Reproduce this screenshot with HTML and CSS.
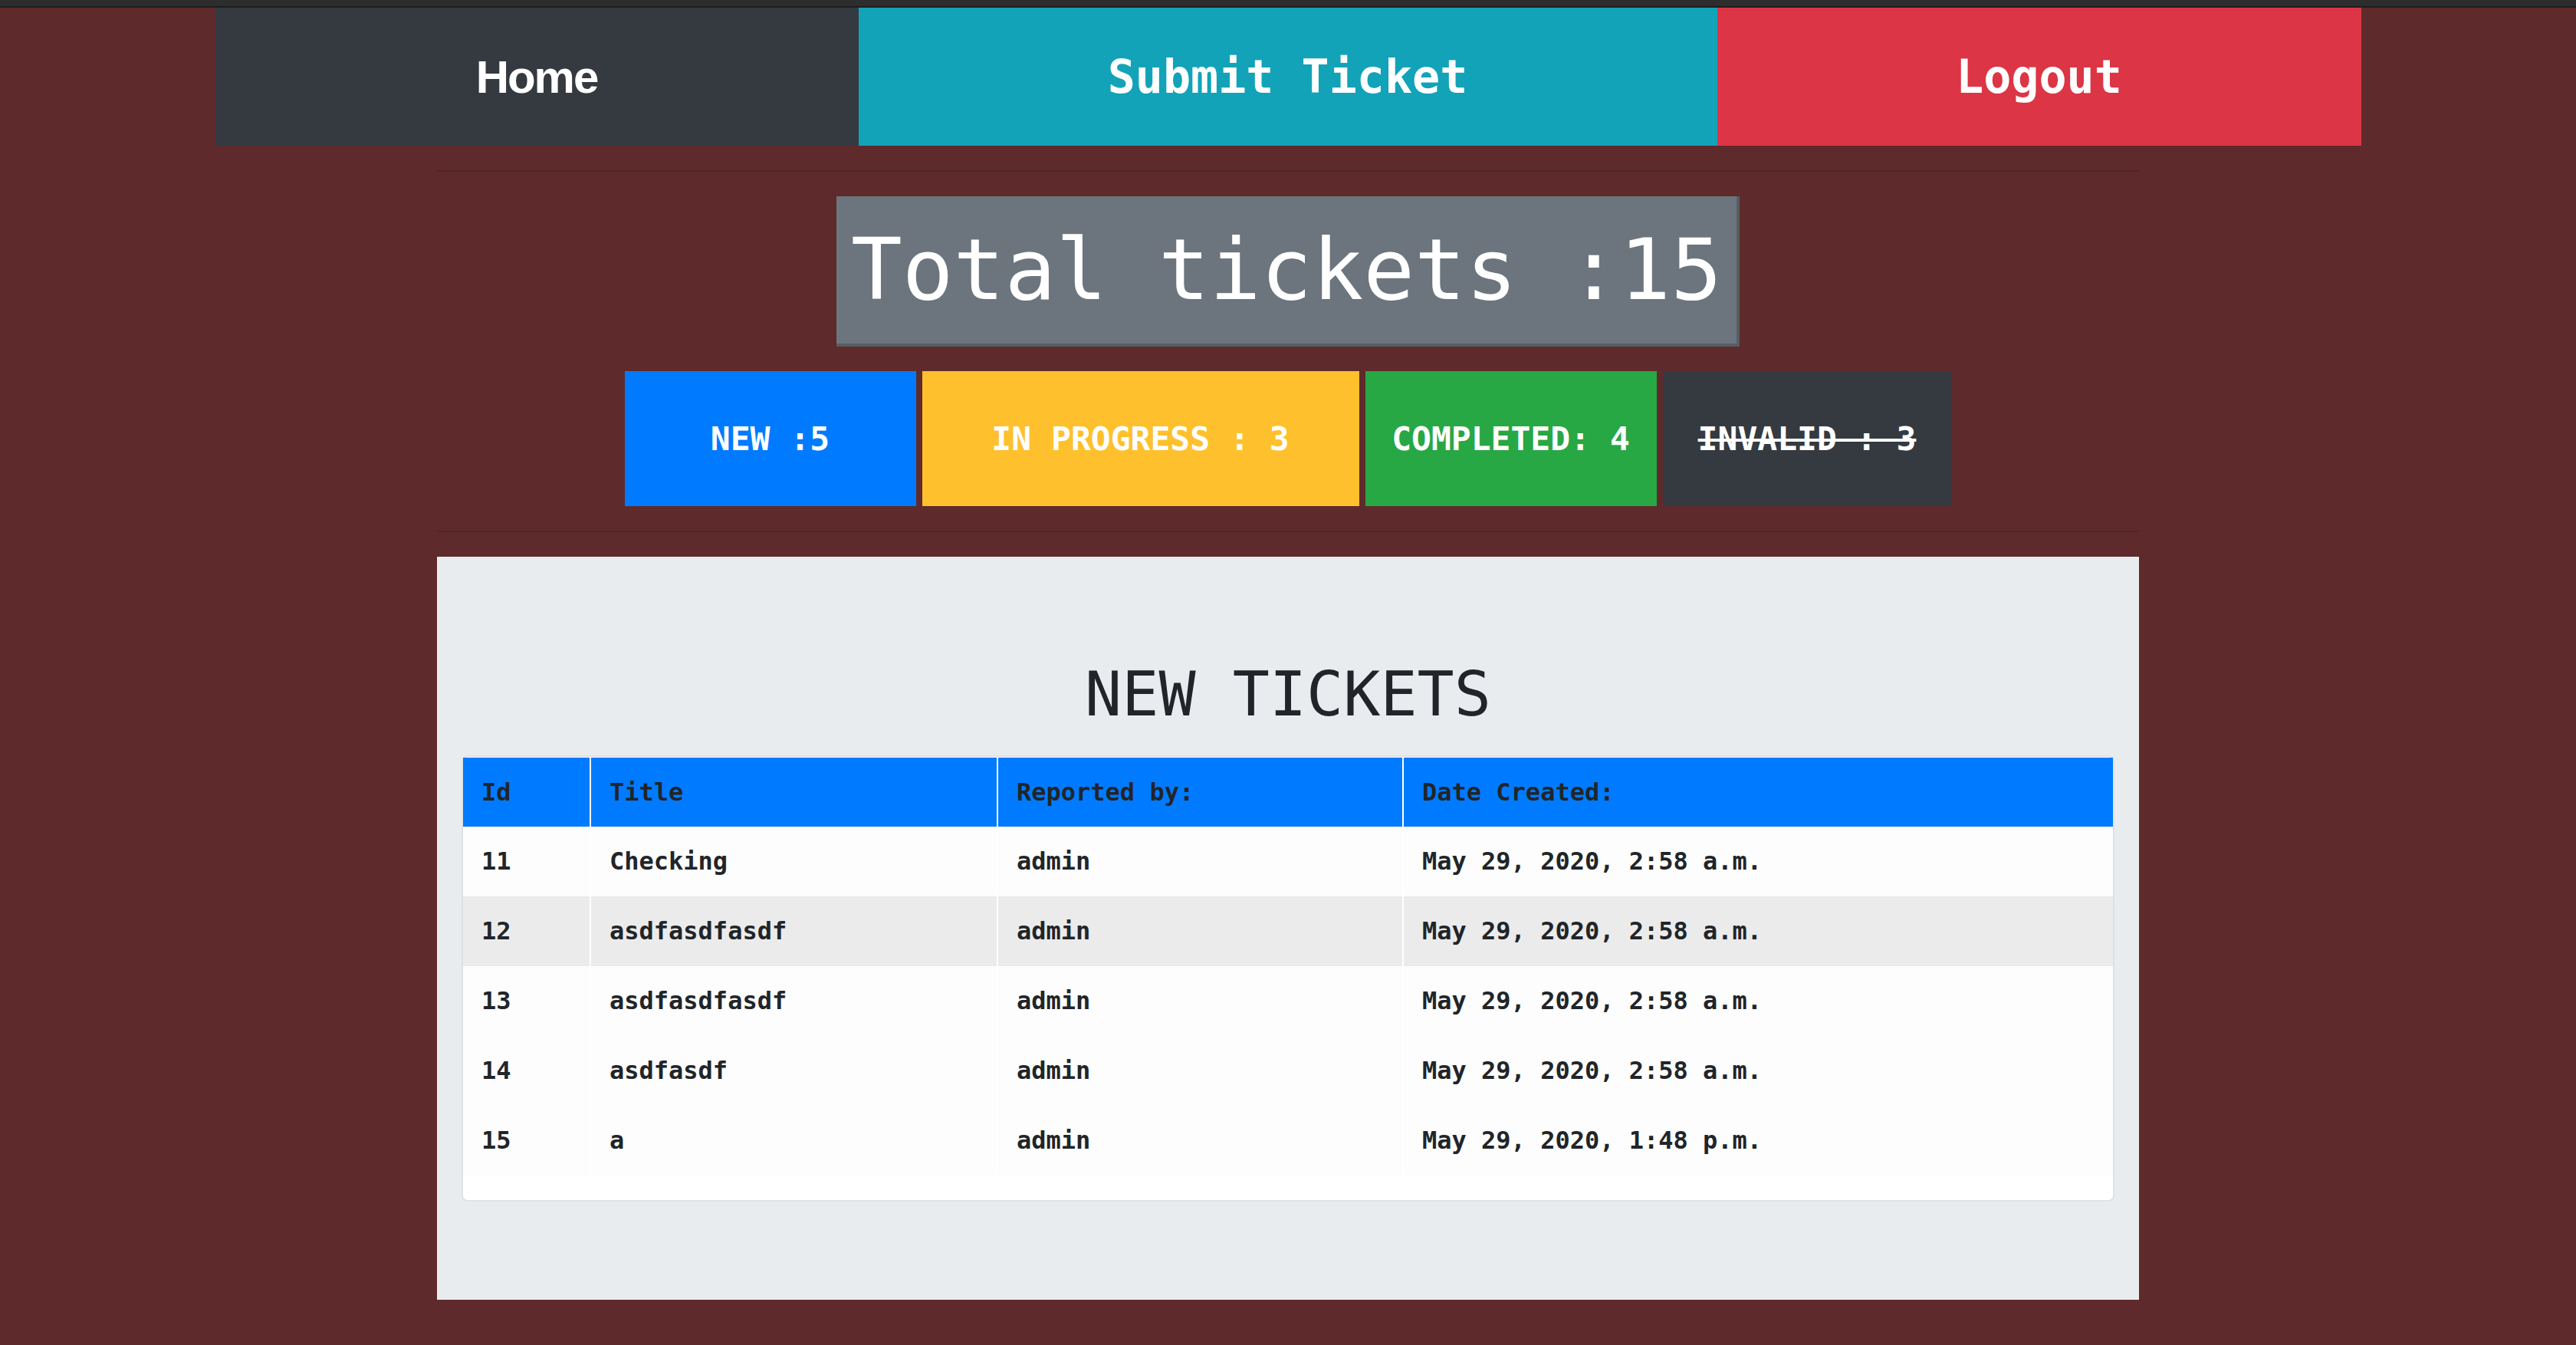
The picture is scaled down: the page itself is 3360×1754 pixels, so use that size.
FILE: index.html
```html
<!DOCTYPE html>
<html lang="en">
<head>
<meta charset="utf-8">
<title>Tickets</title>
<link rel="stylesheet" href="styles.css">
</head>
<body>
<div class="topbar"></div>
<nav class="nav">
  <a class="nav-item home" href="#">Home</a>
  <a class="nav-item submit" href="#">Submit Ticket</a>
  <a class="nav-item logout" href="#">Logout</a>
</nav>
<div class="container">
  <hr class="rule">
  <div class="total-wrap">
    <div class="total">Total tickets :15</div>
  </div>
  <div class="stats">
    <div class="stat s-new">NEW :5</div>
    <div class="stat s-prog">IN PROGRESS : 3</div>
    <div class="stat s-done">COMPLETED: 4</div>
    <div class="stat s-inv"><span class="strike">INVALID : 3</span></div>
  </div>
  <hr class="rule">
  <section class="jumbo">
    <h1 class="title">NEW TICKETS</h1>
    <div class="card">
      <table class="tbl">
        <colgroup>
          <col class="c-id">
          <col class="c-title">
          <col class="c-rep">
          <col>
        </colgroup>
        <thead>
          <tr><th>Id</th><th>Title</th><th>Reported by:</th><th>Date Created:</th></tr>
        </thead>
        <tbody>
          <tr><td>11</td><td>Checking</td><td>admin</td><td>May 29, 2020, 2:58 a.m.</td></tr>
          <tr class="hover"><td>12</td><td>asdfasdfasdf</td><td>admin</td><td>May 29, 2020, 2:58 a.m.</td></tr>
          <tr><td>13</td><td>asdfasdfasdf</td><td>admin</td><td>May 29, 2020, 2:58 a.m.</td></tr>
          <tr><td>14</td><td>asdfasdf</td><td>admin</td><td>May 29, 2020, 2:58 a.m.</td></tr>
          <tr><td>15</td><td>a</td><td>admin</td><td>May 29, 2020, 1:48 p.m.</td></tr>
        </tbody>
      </table>
    </div>
  </section>
</div>
</body>
</html>
```
FILE: styles.css
```css
html, body {
  margin: 0;
  padding: 0;
}
body {
  background: #5e2a2b;
  font-family: "DejaVu Sans Mono", "Liberation Mono", monospace;
  color: #212529;
}
.topbar {
  height: 8px;
  background: #2d2d2d;
  border-bottom: 2px solid #1d1d1d;
}
.nav {
  width: 2799px;
  margin: 0 auto;
  display: grid;
  grid-template-columns: 839px 1120px 840px;
  height: 180px;
}
.nav-item {
  display: flex;
  align-items: center;
  justify-content: center;
  color: #fff;
  text-decoration: none;
  font-weight: bold;
  font-size: 60px;
}
.home {
  background: #343a40;
  font-family: "Liberation Sans", Arial, sans-serif;
  font-size: 60px;
  letter-spacing: -2px;
}
.submit {
  background: #12a3b8;
}
.logout {
  background: #dc3545;
}
.container {
  width: 2220px;
  margin: 0 auto;
}
.rule {
  margin: 32px 0;
  border: 0;
  border-top: 2px solid rgba(0, 0, 0, 0.1);
  height: 0;
}
.total-wrap {
  text-align: center;
  margin-bottom: 32px;
}
.total {
  display: inline-block;
  background: #6c757d;
  color: #fff;
  font-size: 111px;
  line-height: 132px;
  padding: 30px 19px;
  border-right: 4px solid #565e64;
  border-bottom: 4px solid #565e64;
  white-space: pre;
}
.stats {
  display: flex;
  justify-content: center;
  gap: 8px;
}
.stat {
  height: 176px;
  display: flex;
  align-items: center;
  justify-content: center;
  color: #fff;
  font-weight: bold;
  font-size: 43px;
  white-space: pre;
}
.s-new {
  width: 380px;
  background: #007bff;
}
.s-prog {
  width: 570px;
  background: #fec12d;
}
.s-done {
  width: 380px;
  background: #28a745;
}
.s-inv {
  width: 377px;
  background: #343a40;
}
.strike {
  text-decoration: line-through;
  text-decoration-thickness: 4px;
}
.jumbo {
  background: #e9ecef;
  padding: 132px 32px 128px;
}
.title {
  margin: 0 0 31px;
  font-size: 80px;
  line-height: 96px;
  font-weight: normal;
  text-align: center;
  color: #212529;
}
.card {
  background: #fff;
  border: 2px solid #dfe1e4;
  border-radius: 8px;
  padding-top: 1px;
  padding-bottom: 32px;
}
.tbl {
  width: 100%;
  border-collapse: collapse;
  table-layout: fixed;
  font-size: 32px;
  font-weight: bold;
  color: #212529;
}
.c-id {
  width: 166px;
}
.c-title {
  width: 531px;
}
.c-rep {
  width: 529px;
}
.tbl th,
.tbl td {
  text-align: left;
  padding: 0 24px;
  white-space: pre;
}
.tbl th + th,
.tbl td + td {
  border-left: 2px solid #ffffff;
}
.tbl thead th {
  background: #007bff;
  line-height: 90px;
}
.tbl td {
  line-height: 91px;
  background: #fdfdfe;
}
.tbl tr.hover td {
  background: #ebebec;
}
```
